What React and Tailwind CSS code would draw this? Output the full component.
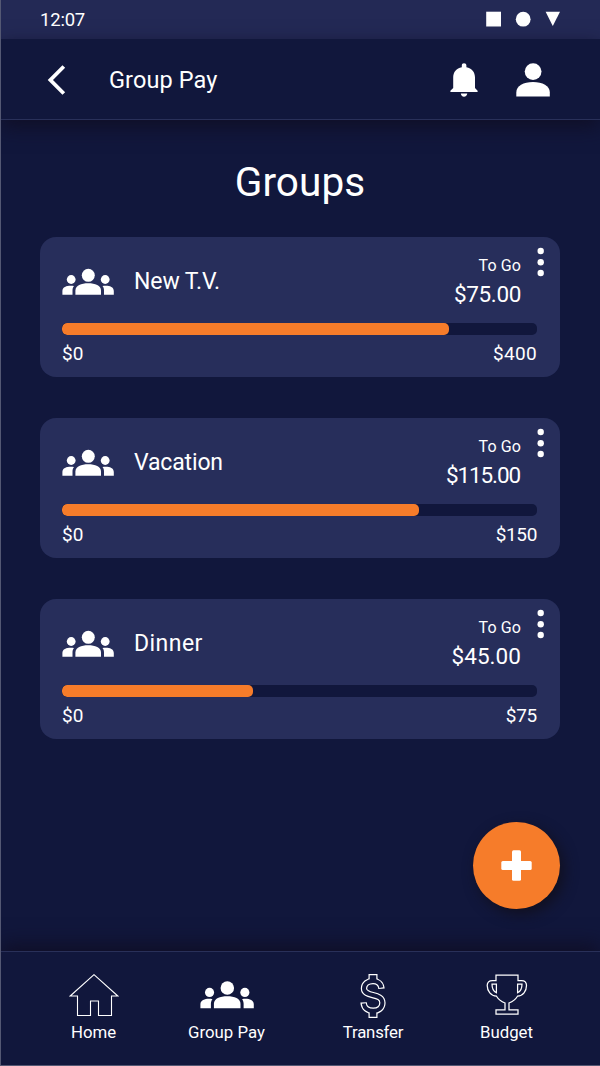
const groups = [
  { name: 'New T.V.', left: '$75.00', total: '$400', fill: 387, nameStyle: 'tracking-[-0.1px]', leftStyle: 'tracking-[-0.35px]', totalStyle: 'tracking-[0.3px]' },
  { name: 'Vacation', left: '$115.00', total: '$150', fill: 357, nameStyle: 'tracking-[-0.15px]', leftStyle: 'tracking-[-1.1px] mr-px', totalStyle: 'tracking-[-0.35px]' },
  { name: 'Dinner', left: '$45.00', total: '$75', fill: 191, nameStyle: 'tracking-[0.45px]', leftStyle: 'tracking-[0.05px]', totalStyle: 'tracking-[-0.25px]' },
];

function PeopleIcon({ className }) {
  return (
    <svg viewBox="0 0 52 27" className={className} fill="currentColor" aria-hidden="true">
      <circle cx="26.3" cy="7.3" r="6.5" />
      <circle cx="9.2" cy="11.5" r="4.4" />
      <circle cx="43.2" cy="11.5" r="4.4" />
      <path d="M13.4 26.8V22.5C13.4 17.4 19.2 15.2 26.2 15.2S39 17.4 39 22.5V26.8Z" />
      <path d="M.4 26.8V23C.4 19 4.7 17.7 8.5 17.7C9.8 17.7 11 17.8 12 18C10.9 19.2 10.5 20.9 10.5 22.5V26.8Z" />
      <path d="M51.8 26.8V23C51.8 19 47.8 17.7 43.9 17.7C42.6 17.7 41.5 17.8 40.5 18C41.6 19.2 42 20.9 42 22.5V26.8Z" />
    </svg>
  );
}

function HomeIcon() {
  return (
    <svg viewBox="0 0 50 44" className="h-11 w-[50px]" fill="none" stroke="currentColor" strokeWidth="1.1" aria-hidden="true">
      <path d="M25 .7L1.2 22H8.5V41.5H21.5V27H29.5V41.5H42.5V22H48.8Z" />
    </svg>
  );
}

function DollarIcon() {
  const curve = 'M22.5 15.8C22.2 10.8 18.8 8 14 8C8.8 8 5 10.8 5 15.5C5 24.5 23.4 19.5 23.4 29.8C23.4 34.8 19.5 37.8 14.2 37.8C8.4 37.8 4.8 34.5 4.6 29.3';
  return (
    <svg viewBox="0 0 28 46" className="h-[46px] w-7" fill="none" aria-hidden="true">
      <g stroke="currentColor" strokeWidth="6.4">
        <path d={curve} pathLength="100" />
        <path d="M14 1V8M14 37V45" strokeWidth="9" />
      </g>
      <g stroke="#11173c" strokeWidth="4">
        <path d={curve} pathLength="100" strokeDasharray="97 3" strokeDashoffset="-1.5" />
        <path d="M14 2.2V8M14 37V43.8" strokeWidth="6.6" />
      </g>
    </svg>
  );
}

function TrophyIcon() {
  return (
    <svg viewBox="0 0 42 42" className="h-[42px] w-[42px]" fill="none" stroke="currentColor" strokeWidth="1.25" aria-hidden="true">
      <path d="M10 1H32V6.5H35.5C39 6.5 40.5 8.5 40.5 11.5C40.5 17 37 22 31.5 22.2C29.5 25.5 26.5 27.5 23 29V35.8H32V40H10V35.8H19V29C15.5 27.5 12.5 25.5 10.5 22.2C5 22 1.2 17 1.2 11.5C1.2 8.5 3 6.5 6.5 6.5H10Z" />
      <path d="M10.4 10V18.8C7.5 17.5 6 14 6 10ZM31.6 10V18.8C34.5 17.5 36 14 36 10Z" />
    </svg>
  );
}

function GroupCard({ group }) {
  return (
    <article className="flex h-[140px] gap-1 rounded-2xl bg-[#272e5b] pl-[22px] pr-4">
      <div className="flex w-[475px] shrink-0 flex-col">
        <div className="flex h-[86px] items-start pr-4">
          <PeopleIcon className="mt-[31px] h-[27px] w-[52px]" />
          <h2 className={`ml-5 mt-7 text-[23px] leading-[34px] ${group.nameStyle}`}>{group.name}</h2>
          <div className="ml-auto mt-[17px] text-right">
            <p className="text-[16px] leading-6 tracking-[0.1px]">To Go</p>
            <p className={`text-[22.5px] leading-8 ${group.leftStyle}`}>{group.left}</p>
          </div>
        </div>
        <div className="h-3 overflow-hidden rounded-[5px] bg-[#11173c]">
          <div className="h-full rounded-[5px] bg-[#f67c2a]" style={{ width: group.fill }} />
        </div>
        <div className="mt-[7px] flex justify-between text-[19px] leading-6">
          <span>$0</span>
          <span className={group.totalStyle}>{group.total}</span>
        </div>
      </div>
      <svg viewBox="0 0 8 30" className="-ml-[4px] mt-[10px] h-[30px] w-2 shrink-0" fill="currentColor" aria-hidden="true">
        <circle cx="3.7" cy="4" r="3.2" />
        <circle cx="3.7" cy="15.3" r="3.2" />
        <circle cx="3.7" cy="26" r="3.2" />
      </svg>
    </article>
  );
}

export default function App() {
  return (
    <div className="relative flex h-[1066px] w-[600px] flex-col overflow-hidden border-b border-l border-[#545873] bg-[#11173c] font-[Roboto,sans-serif] text-white">
      <div className="flex h-[39px] shrink-0 items-center justify-between bg-[#232955] pl-[39px] pr-10">
        <span className="mt-0.5 text-[18.5px] tracking-[-0.2px]">12:07</span>
        <svg viewBox="0 0 74 16" className="-mt-[1px] h-4 w-[74px]" fill="currentColor" aria-hidden="true">
          <path d="M.2 .7H15V15.5H.2Z" />
          <circle cx="37.2" cy="8.2" r="7.4" />
          <path d="M59.6 .7H74L66.8 15Z" />
        </svg>
      </div>
      <header className="z-10 flex h-[81px] shrink-0 items-center border-b border-[#293059] bg-[#11173c] pl-[45px] pr-[50px] pt-0.5 shadow-[0_7px_18px_#100f27]">
        <svg viewBox="0 0 20 32" className="h-8 w-5" fill="none" stroke="currentColor" strokeWidth="3.8" aria-hidden="true">
          <path d="M17.8 2.5L4.4 16L17.8 29.5" />
        </svg>
        <h1 className="ml-[43px] mt-px text-[23.5px] tracking-[0.1px]">Group Pay</h1>
        <svg viewBox="0 0 28 34" className="-mt-px ml-auto h-[34px] w-7" fill="currentColor" aria-hidden="true">
          <path d="M14 .3C12.7 .3 11.8 1.1 11.8 2.4V4.2C6.4 5.4 3.2 9 3.2 14.2V25.1L.4 27.7V29H27.6V27.7L25 25.1V14.2C25 9 21.8 5.4 16.4 4.2V2.4C16.4 1.1 15.4 .3 14 .3ZM10.8 30.5H17.3C17.1 32.4 15.8 33.7 14 33.7S11 32.4 10.8 30.5Z" />
        </svg>
        <svg viewBox="0 0 34 34" className="-mt-px ml-[38px] h-[34px] w-[34px]" fill="currentColor" aria-hidden="true">
          <circle cx="17.1" cy="8.6" r="8.4" />
          <path d="M.3 33.6V29.5C.3 22.8 7.5 19.1 17 19.1S33.8 22.8 33.8 29.5V33.6Z" />
        </svg>
      </header>
      <main className="flex flex-1 flex-col px-10 pl-[39px] pt-[37px]">
        <h2 className="mb-[29px] text-center text-[40.5px] leading-[51px] tracking-[0.1px]">Groups</h2>
        <div className="flex flex-col gap-[41px]">
          {groups.map((group) => <GroupCard key={group.name} group={group} />)}
        </div>
        <button aria-label="Add group" className="ml-auto mt-[83px] flex h-[87px] w-[87px] items-center justify-center rounded-full bg-[#f67c2a] shadow-[4px_5px_14px_#11101f]">
          <svg viewBox="0 0 31 31" className="h-[31px] w-[31px]" fill="currentColor" aria-hidden="true">
            <rect x="11" y=".3" width="9" height="30.4" rx="1.5" />
            <rect x=".3" y="11" width="30.4" height="9" rx="1.5" />
          </svg>
        </button>
      </main>
      <nav className="grid h-[114px] shrink-0 grid-cols-[185px_81px_212px_55px] justify-start border-t border-[#293059] bg-[#11173c] text-[16.8px] leading-5 shadow-[0_-7px_18px_#100f27]">
        <div className="flex flex-col items-center pt-[22px]"><HomeIcon /><span className="mt-[4px]">Home</span></div>
        <div className="flex flex-col items-center pt-[28px]"><PeopleIcon className="h-[29px] w-[54px]" /><span className="mt-[13px] whitespace-nowrap">Group Pay</span></div>
        <div className="flex flex-col items-center pt-[21px]"><DollarIcon /><span className="mt-[3px] tracking-[-0.2px]">Transfer</span></div>
        <div className="flex flex-col items-center pt-[22px]"><TrophyIcon /><span className="mt-[6px]">Budget</span></div>
      </nav>
    </div>
  );
}
